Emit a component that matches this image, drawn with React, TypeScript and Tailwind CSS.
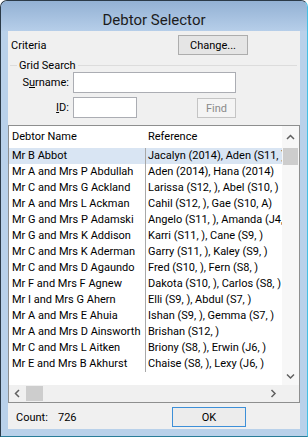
import React from "react";

const rows: [string, string][] = [
  ["Mr B Abbot", "Jacalyn (2014), Aden (S11, )"],
  ["Mr A and Mrs P Abdullah", "Aden (2014), Hana (2014)"],
  ["Mr C and Mrs G Ackland", "Larissa (S12, ), Abel (S10, )"],
  ["Mr A and Mrs L Ackman", "Cahil (S12, ), Gae (S10, A)"],
  ["Mr G and Mrs P Adamski", "Angelo (S11, ), Amanda (J4, )"],
  ["Mr G and Mrs K Addison", "Karri (S11, ), Cane (S9, )"],
  ["Mr C and Mrs K Aderman", "Garry (S11, ), Kaley (S9, )"],
  ["Mr C and Mrs D Agaundo", "Fred (S10, ), Fern (S8, )"],
  ["Mr F and Mrs F Agnew", "Dakota (S10, ), Carlos (S8, )"],
  ["Mr I and Mrs G Ahern", "Elli (S9, ), Abdul (S7, )"],
  ["Mr A and Mrs E Ahuia", "Ishan (S9, ), Gemma (S7, )"],
  ["Mr A and Mrs D Ainsworth", "Brishan (S12, )"],
  ["Mr C and Mrs L Aitken", "Briony (S8, ), Erwin (J6, )"],
  ["Mr E and Mrs B Akhurst", "Chaise (S8, ), Lexy (J6, )"],
];

// small scrollbar arrow, dir: up | down | left | right
function Arrow({ dir }: { dir: "up" | "down" | "left" | "right" }) {
  const pts = {
    up: "1,5 4.5,1.5 8,5",
    down: "1,1.5 4.5,5 8,1.5",
    left: "5,1 1.5,4.5 5,8",
    right: "1.5,1 5,4.5 1.5,8",
  }[dir];
  const horiz = dir === "up" || dir === "down";
  return (
    <svg width={horiz ? 9 : 7} height={horiz ? 7 : 9} viewBox={horiz ? "0 0 9 7" : "0 0 7 9"}>
      <polyline points={pts} fill="none" stroke="#606060" strokeWidth="1.5" />
    </svg>
  );
}

export default function App() {
  return (
    <div
      className="w-[308px] h-[437px] flex flex-col rounded-t-[7px] border border-[#2b3a48] border-r-[#45bfe4] border-b-[#2a7d99] bg-[#b9d1ea] text-[11px] text-black overflow-hidden"
      style={{ fontFamily: 'Roboto, "Noto Sans", sans-serif' }}
    >
      {/* Title bar */}
      <div className="h-[30px] pt-[9px] flex items-center justify-center rounded-t-[6px] bg-gradient-to-b from-[#93b1d4] to-[#b6cee9]">
        <span className="text-[15px] text-[#1c1c1c] leading-none">Debtor Selector</span>
      </div>

      {/* Client area */}
      <div className="h-[398px] mx-[7px] bg-[#f0f0f0] flex flex-col">
        {/* Criteria */}
        <div className="flex items-center pt-[4px] h-[24px]">
          <span className="w-[170px] pl-[3px] leading-none">Criteria</span>
          <button className="w-[70px] h-[20px] border border-[#adadad] bg-[#e5e5e5] leading-none">Change...</button>
        </div>

        {/* Grid Search group */}
        <div className="flex items-center h-[14px] mt-[3px] pl-[2px] pr-[3px]">
          <div className="w-[7px] h-px bg-[#dcdcdc]" />
          <span className="px-[2px] leading-none">Grid Search</span>
          <div className="flex-1 h-px bg-[#dcdcdc]" />
        </div>

        <div className="flex items-center h-[21px]">
          <span className="w-[61px] text-right leading-none">
            S<span className="underline">u</span>rname:
          </span>
          <input className="ml-[4px] w-[163px] h-[21px] bg-white border border-[#abadb3] outline-none" />
        </div>

        <div className="flex items-center h-[21px] mt-[4px]">
          <span className="w-[61px] text-right leading-none">
            <span className="underline">I</span>D:
          </span>
          <input className="ml-[4px] w-[64px] h-[21px] bg-white border border-[#abadb3] outline-none" />
          <button disabled className="ml-[60px] mt-[1px] w-[39px] h-[20px] border border-[#c4c4c4] bg-[#f4f4f4] text-[#8a8a8a] leading-none">
            Find
          </button>
        </div>

        {/* Grid */}
        <div className="mt-[7px] h-[278px] border border-[#8e8f8f] bg-white flex flex-col">
          <div className="flex h-[259px]">
            <div className="w-[273px] overflow-hidden">
              <div className="h-[22px] flex items-center">
                <span className="w-[137px] pl-[3px]">Debtor Name</span>
                <span className="pl-[2px]">Reference</span>
              </div>
              {rows.map(([name, ref], i) => (
                <div key={name} className={`flex h-[16px] items-center ${i === 0 ? "bg-[#d9e5f3]" : ""}`}>
                  <div className="w-[137px] h-full flex items-center pl-[3px] border-r border-[#a8a8a8] whitespace-nowrap overflow-hidden">
                    {name}
                  </div>
                  <div className="flex-1 pl-[2px] whitespace-nowrap overflow-hidden">{ref}</div>
                </div>
              ))}
            </div>
            {/* vertical scrollbar */}
            <div className="w-[17px] flex flex-col items-center bg-[#f7f7f7]">
              <div className="h-[22px] flex items-center justify-center">
                <Arrow dir="up" />
              </div>
              <div className="w-[15px] h-[17px] bg-[#cdcdcd]" />
              <div className="flex-1" />
              <div className="h-[17px] flex items-center justify-center">
                <Arrow dir="down" />
              </div>
            </div>
          </div>
          {/* horizontal scrollbar */}
          <div className="flex h-[17px]">
            <div className="w-[273px] flex items-center bg-[#f0f0f0]">
              <div className="w-[17px] flex justify-center">
                <Arrow dir="left" />
              </div>
              <div className="w-[17px] h-[15px] bg-[#cdcdcd]" />
              <div className="flex-1" />
              <div className="w-[17px] flex justify-center">
                <Arrow dir="right" />
              </div>
            </div>
            <div className="w-[17px] bg-[#f0f0f0]" />
          </div>
        </div>

        {/* Footer */}
        <div className="flex items-center mt-[4px] h-[20px]">
          <span className="w-[50px] pl-[8px] leading-none">Count:</span>
          <span className="w-[114px] leading-none">726</span>
          <button className="w-[74px] h-[20px] border border-[#3c8fd8] bg-[#ececec] leading-none">OK</button>
        </div>
      </div>
    </div>
  );
}
